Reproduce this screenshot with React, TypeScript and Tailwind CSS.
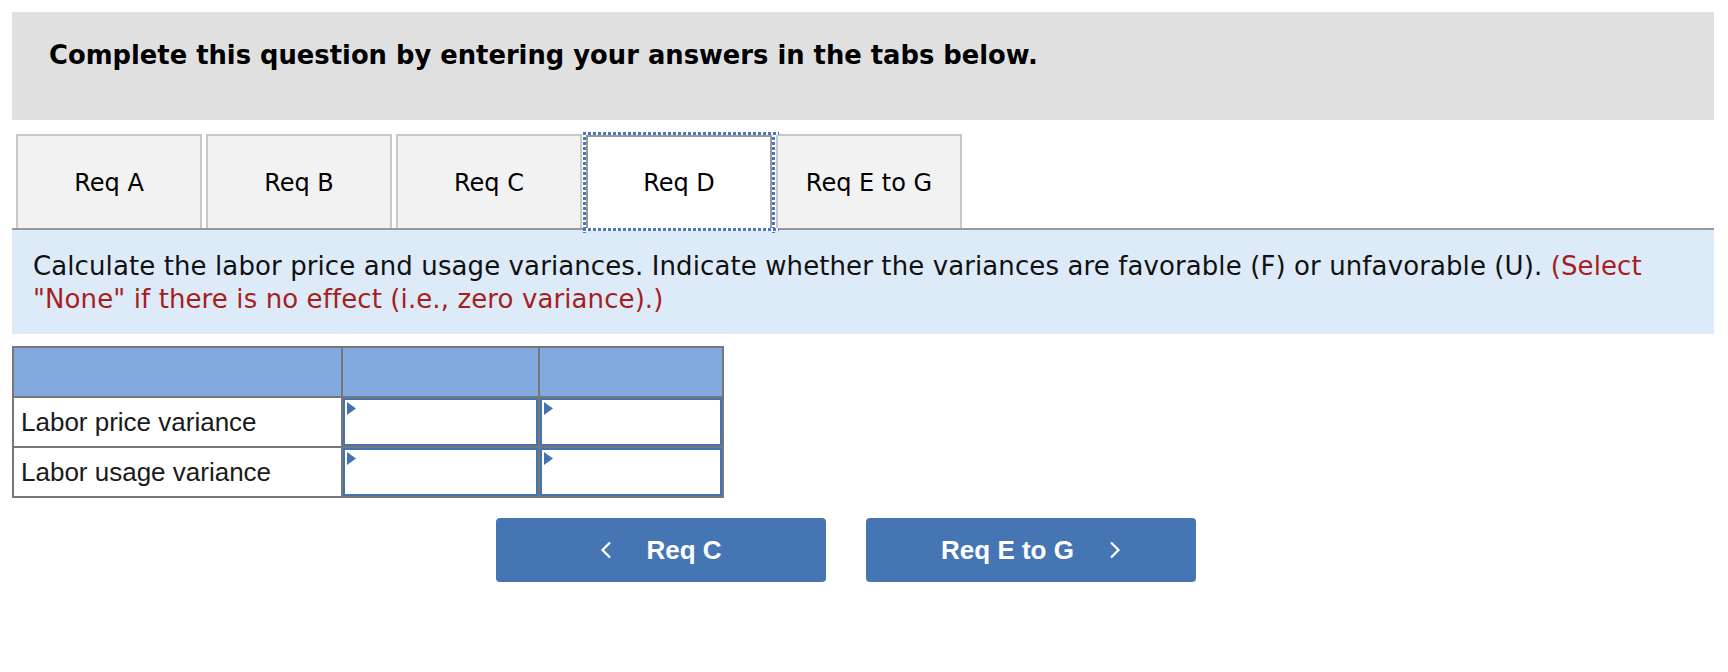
import React from "react";

const Marker = () => (
  <svg className="absolute left-[2px] top-[2px]" width="9" height="13" viewBox="0 0 9 13">
    <polygon points="0,0 9,6.5 0,13" fill="#4573b1" />
  </svg>
);

const InputCell = () => (
  <div className="relative bg-white border-2 border-[#4573b1]">
    <Marker />
  </div>
);

const Chevron = ({ dir }: { dir: "left" | "right" }) => (
  <svg width="12" height="18" viewBox="0 0 12 18" className="shrink-0">
    {dir === "left" ? (
      <polyline points="10,1.5 2.5,9 10,16.5" fill="none" stroke="white" strokeWidth="2.2" />
    ) : (
      <polyline points="2,1.5 9.5,9 2,16.5" fill="none" stroke="white" strokeWidth="2.2" />
    )}
  </svg>
);

export default function App() {
  const tabs = ["Req A", "Req B", "Req C", "Req D", "Req E to G"];
  return (
    <div className="w-[1728px] h-[672px] bg-white">
      <div className="px-[12px] pt-[12px] w-[1726px]">
        {/* header */}
        <div className="h-[108px] bg-[#e0e0e0] pt-[28px] pl-[37px]">
          <div className="font-['DejaVu_Sans',sans-serif] font-bold text-[25.8px] leading-[31px] text-black">
            Complete this question by entering your answers in the tabs below.
          </div>
        </div>

        {/* tabs */}
        <div className="flex items-end gap-[4px] pl-[4px] pt-[14px] border-b-2 border-[#999999]">
          {tabs.map((t) =>
            t === "Req D" ? (
              <div
                key={t}
                className="relative w-[186px] h-[95px] -mb-[2px] bg-white border-2 border-b-0 border-[#999999] flex items-center justify-center font-['DejaVu_Sans',sans-serif] text-[24px] text-black pb-[1px]"
              >
                <span className="absolute -left-[5px] -top-[5px] w-[3px] h-[101px] bg-[repeating-linear-gradient(180deg,#4a78c0_0_3px,#ffffff_3px_5px)]" />
                <span className="absolute -right-[5px] -top-[5px] w-[3px] h-[101px] bg-[repeating-linear-gradient(180deg,#4a78c0_0_3px,#ffffff_3px_5px)]" />
                <span className="absolute -left-[5px] -top-[5px] h-[3px] w-[196px] bg-[repeating-linear-gradient(90deg,#4a78c0_0_3px,#ffffff_3px_5px)]" />
                <span className="absolute -left-[5px] -bottom-[1px] h-[3px] w-[196px] bg-[repeating-linear-gradient(90deg,#4a78c0_0_3px,#ffffff_3px_5px)]" />
                {t}
              </div>
            ) : (
              <div
                key={t}
                className="w-[186px] h-[94px] bg-[#f2f2f2] border-2 border-b-0 border-[#c8c8c8] flex items-center justify-center font-['DejaVu_Sans',sans-serif] text-[24px] text-black pt-[2px]"
              >
                {t}
              </div>
            )
          )}
        </div>

        {/* instructions */}
        <div className="bg-[#ddebf8] px-[21px] pt-[20px] pb-[18px] font-['DejaVu_Sans',sans-serif] text-[26px] leading-[33px] tracking-[0.1px] text-[#111111]">
          Calculate the labor price and usage variances. Indicate whether the variances are favorable (F) or unfavorable (U).{" "}
          <span className="text-[#a61f1f]">(Select "None" if there is no effect (i.e., zero variance).)</span>
        </div>

        {/* table */}
        <div className="mt-[12px] w-[712px] grid grid-cols-[327px_195px_182px] grid-rows-[48px_48px_48px] gap-[2px] p-[2px] bg-[#777777]">
          <div className="bg-[#82aadf]" />
          <div className="bg-[#82aadf]" />
          <div className="bg-[#82aadf]" />
          <div className="bg-white flex items-center pl-[7px] font-['Liberation_Sans',Arial,sans-serif] text-[26px] text-[#1a1a1a]">
            Labor price variance
          </div>
          <InputCell />
          <InputCell />
          <div className="bg-white flex items-center pl-[7px] font-['Liberation_Sans',Arial,sans-serif] text-[26px] text-[#1a1a1a]">
            Labor usage variance
          </div>
          <InputCell />
          <InputCell />
        </div>

        {/* nav buttons */}
        <div className="mt-[20px] ml-[484px] flex gap-[40px]">
          <div className="w-[330px] h-[64px] rounded-[4px] bg-[#4675b3] flex items-center justify-center gap-[34px] font-['Liberation_Sans',Arial,sans-serif] font-bold text-[26px] text-white">
            <Chevron dir="left" />
            <span>Req C</span>
          </div>
          <div className="w-[330px] h-[64px] rounded-[4px] bg-[#4675b3] flex items-center justify-center gap-[35px] font-['Liberation_Sans',Arial,sans-serif] font-bold text-[26px] text-white">
            <span>Req E to G</span>
            <Chevron dir="right" />
          </div>
        </div>
      </div>
    </div>
  );
}
